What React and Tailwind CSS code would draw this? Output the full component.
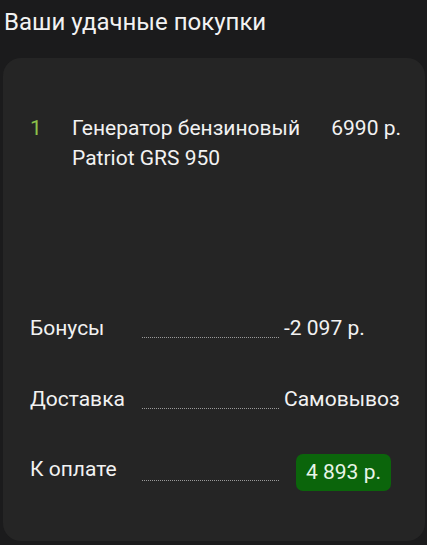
export default function App() {
    const rows = [
        { label: 'Бонусы', value: '-2 097 р.', dot: 'mt-[24px]' },
        { label: 'Доставка', value: 'Самовывоз', dot: 'mt-[24px]' },
    ];

    return (
        <div className="w-[427px] h-[545px] overflow-hidden bg-[#1b1b1c] text-[#f2f2f2]" style={{ fontFamily: 'Roboto, "Noto Sans", sans-serif' }}>
            <h1 className="pl-[4px] pt-[6px] text-[24px] leading-[32px] font-normal">Ваши удачные покупки</h1>

            <div className="ml-[3px] mr-[2px] mt-[20px] h-[483px] rounded-[18px] bg-[#252525] pl-[27px] pr-[24px] pt-[55px]">
                {/* товар */}
                <div className="flex text-[21px] leading-[30px]">
                    <div className="w-[42px] shrink-0 text-[#8bc34a]">1</div>
                    <div className="flex-1">Генератор бензиновый Patriot GRS 950</div>
                    <div className="shrink-0 pl-[6px]">6990 р.</div>
                </div>

                {/* итоги */}
                <div className="mt-[140px] flex flex-col gap-[41px] text-[21px] leading-[30px]">
                    {rows.map((r) => (
                        <div key={r.label} className="flex items-start">
                            <div className="w-[112px] shrink-0">{r.label}</div>
                            <div className={`w-[137px] shrink-0 border-b border-dotted border-[#9a9a9a] ${r.dot}`}></div>
                            <div className="ml-[5px]">{r.value}</div>
                        </div>
                    ))}
                    <div className="-mt-[1px] flex items-start">
                        <div className="w-[112px] shrink-0">К оплате</div>
                        <div className="mt-[26px] w-[137px] shrink-0 border-b border-dotted border-[#9a9a9a]"></div>
                        <div className="ml-[17px] rounded-[7px] bg-[#0b650b] px-[10px] pt-[3px] pb-[4px] text-[#e8f5e8]">4 893 р.</div>
                    </div>
                </div>
            </div>
        </div>
    );
}
